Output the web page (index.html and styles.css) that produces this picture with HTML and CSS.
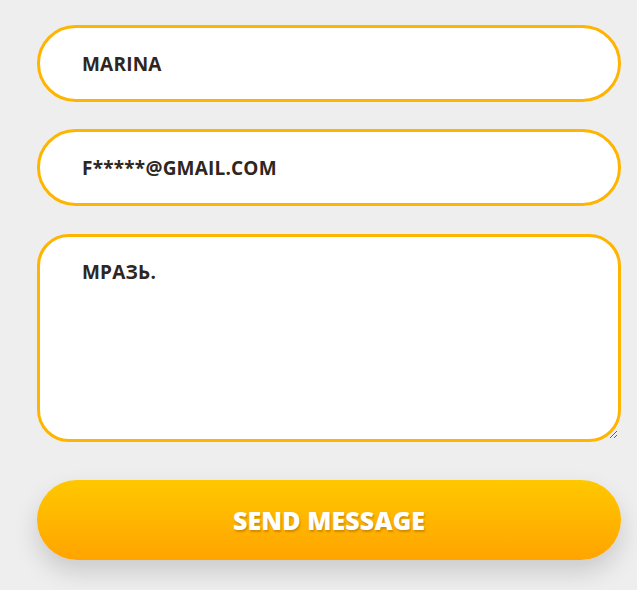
FILE: index.html
```html
<!DOCTYPE html>
<html>
<head>
<meta charset="utf-8">
<link rel="stylesheet" href="styles.css">
</head>
<body>
<form class="contact-form">
  <input class="field" type="text" value="MARINA">
  <input class="field" type="text" value="F*****@GMAIL.COM">
  <textarea class="field message">МРАЗЬ.</textarea>
  <button class="send" type="button">SEND MESSAGE</button>
</form>
</body>
</html>
```
FILE: styles.css
```css
html, body {
  margin: 0;
  padding: 0;
  background: #eeeeee;
}
body {
  padding: 25px 16px 40px 37px;
}
.contact-form {
  width: 584px;
  display: flex;
  flex-direction: column;
}
.field {
  box-sizing: border-box;
  width: 584px;
  height: 77px;
  border: 3px solid #ffb400;
  border-radius: 40px;
  background: #fff;
  padding: 0 42px;
  font-family: "Open Sans", sans-serif;
  font-weight: 700;
  font-size: 19px;
  letter-spacing: 0.2px;
  color: #2e2620;
  outline: none;
  margin: 0 0 27px 0;
}
.message {
  height: 208px;
  border-radius: 32px;
  padding: 22px 42px;
  margin: 1px 0 38px 0;
  resize: vertical;
  line-height: 26px;
  display: block;
}
.send {
  width: 584px;
  height: 80px;
  border: none;
  border-radius: 40px;
  background: linear-gradient(to bottom, #ffc800, #ffa400);
  box-shadow: 0 12px 24px rgba(0, 0, 0, 0.15);
  color: #fff;
  font-family: "Open Sans", sans-serif;
  font-weight: 800;
  font-size: 25px;
  letter-spacing: 0.1px;
  text-shadow: 1px 2px 2px rgba(120, 70, 0, 0.35);
  cursor: pointer;
}
```
